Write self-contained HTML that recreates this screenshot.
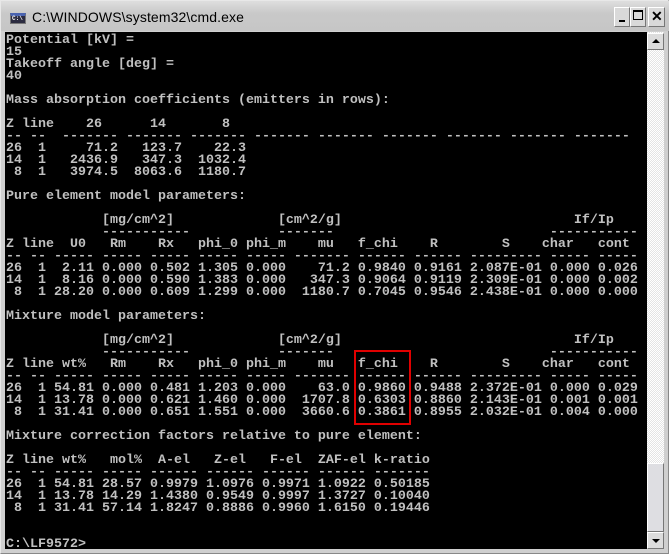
<!DOCTYPE html>
<html><head><meta charset="utf-8"><style>
*{margin:0;padding:0;box-sizing:border-box}
html,body{width:669px;height:554px;overflow:hidden;background:#d4d0c8}
#win{position:absolute;left:0;top:0;width:669px;height:554px;background:#cfcfcf;border:1px solid #e8e8e8;border-right-color:#888;border-bottom-color:#888}
#title{position:absolute;left:0;top:0;width:669px;height:30px;background:linear-gradient(#dedede,#c9c9c9 40%,#c6c6c6)}
#ttext{position:absolute;left:31px;top:8px;font:14px "Liberation Sans",sans-serif;color:#000;letter-spacing:0.1px}
#icon{position:absolute;left:9px;top:12px;width:16px;height:11px;background:#2b2b40;border:1px solid #777;border-top:3px solid #4a63b0}
#icon span{position:absolute;left:1px;top:0px;font:bold 6px "Liberation Mono",monospace;color:#fff;line-height:6px}
.btn{position:absolute;top:6px;height:20px;background:#d9d9d9;border:1px solid #fff;border-right-color:#777;border-bottom-color:#777}
#client{position:absolute;left:4px;top:31px;width:642px;height:517px;background:#000;overflow:hidden}
pre{position:absolute;left:1px;top:3px;font:bold 13.333px/12px "Liberation Mono",monospace;color:#c0c0c0;white-space:pre}
#sb{position:absolute;left:646px;top:31px;width:17px;height:517px;background:repeating-conic-gradient(#fff 0 25%,#e4e4e4 0 50%) 0 0/2px 2px}
.sbtn{position:absolute;left:0;width:17px;height:17px;background:#dcdcdc;border:1px solid #fff;border-right-color:#777;border-bottom-color:#777}
#red{position:absolute;left:353px;top:349px;width:57px;height:75px;border:2px solid #e00000}
</style></head><body>
<div id="win">
<div id="title">
<div id="icon"><span>C:\</span></div>
<div id="ttext">C:\WINDOWS\system32\cmd.exe</div>
<div class="btn" style="left:613px;width:16px"><div style="position:absolute;left:4px;top:12px;width:6px;height:2px;background:#000"></div></div>
<div class="btn" style="left:629px;width:16px"><div style="position:absolute;left:2px;top:2px;width:10px;height:10px;border:1px solid #000;border-top-width:2px"></div></div>
<div class="btn" style="left:647px;width:17px"><div style="position:absolute;left:2px;top:0px;font:bold 14px 'Liberation Sans',sans-serif;color:#000">✕</div></div>
</div>
<div id="client"><pre>Potential [kV] =
15
Takeoff angle [deg] =
40

Mass absorption coefficients (emitters in rows):

Z line    26      14       8
-- --  ------- ------- ------- ------- ------- ------- ------- ------- -------
26  1     71.2   123.7    22.3
14  1   2436.9   347.3  1032.4
 8  1   3974.5  8063.6  1180.7

Pure element model parameters:

            [mg/cm^2]             [cm^2/g]                             If/Ip
            -----------           -------                           -----------
Z line  U0   Rm    Rx   phi_0 phi_m    mu   f_chi    R        S    char   cont
-- -- ----- ----- ----- ----- ----- ------- ------ ------ --------- ----- -----
26  1  2.11 0.000 0.502 1.305 0.000    71.2 0.9840 0.9161 2.087E-01 0.000 0.026
14  1  8.16 0.000 0.590 1.383 0.000   347.3 0.9064 0.9119 2.309E-01 0.000 0.002
 8  1 28.20 0.000 0.609 1.299 0.000  1180.7 0.7045 0.9546 2.438E-01 0.000 0.000

Mixture model parameters:

            [mg/cm^2]             [cm^2/g]                             If/Ip
            -----------           -------                           -----------
Z line wt%   Rm    Rx   phi_0 phi_m    mu   f_chi    R        S    char   cont
-- -- ----- ----- ----- ----- ----- ------- ------ ------ --------- ----- -----
26  1 54.81 0.000 0.481 1.203 0.000    63.0 0.9860 0.9488 2.372E-01 0.000 0.029
14  1 13.78 0.000 0.621 1.460 0.000  1707.8 0.6303 0.8860 2.143E-01 0.001 0.001
 8  1 31.41 0.000 0.651 1.551 0.000  3660.6 0.3861 0.8955 2.032E-01 0.004 0.000

Mixture correction factors relative to pure element:

Z line wt%   mol%  A-el   Z-el   F-el  ZAF-el k-ratio
-- -- ----- ----- ------ ------ ------ ------ -------
26  1 54.81 28.57 0.9979 1.0976 0.9971 1.0922 0.50185
14  1 13.78 14.29 1.4380 0.9549 0.9997 1.3727 0.10040
 8  1 31.41 57.14 1.8247 0.8886 0.9960 1.6150 0.19446


C:\LF9572&gt;</pre></div>
<div id="red"></div>
<div id="sb">
<div class="sbtn" style="top:1px"><div style="position:absolute;left:4px;top:5px;width:0;height:0;border-left:4px solid transparent;border-right:4px solid transparent;border-bottom:4px solid #000"></div></div>
<div class="sbtn" style="top:431px;height:69px;background:#dedee2"></div>
<div class="sbtn" style="top:500px"><div style="position:absolute;left:4px;top:6px;width:0;height:0;border-left:4px solid transparent;border-right:4px solid transparent;border-top:4px solid #000"></div></div>
</div>
</div>
</body></html>
